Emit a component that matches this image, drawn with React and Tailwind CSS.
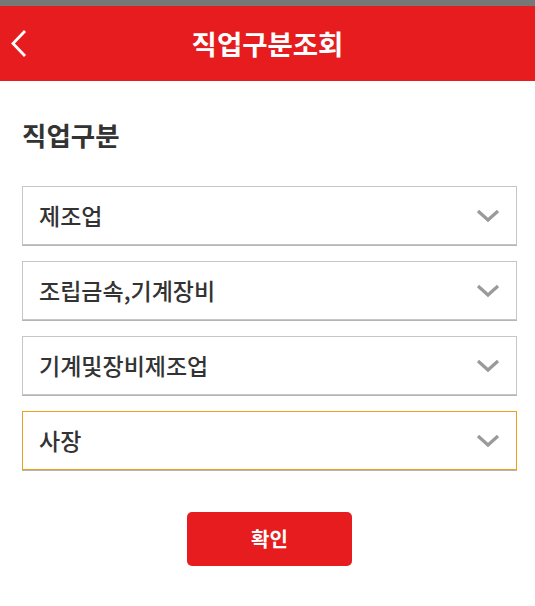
const font = { fontFamily: '"Noto Sans CJK KR", "Noto Sans", sans-serif' };

function Chevron() {
  return (
    <svg width="24" height="14" viewBox="0 0 24 14" className="shrink-0">
      <path d="M2 2 L12 11 L22 2" fill="none" stroke="#9a9a9a" strokeWidth="3.2" />
    </svg>
  );
}

function SelectBox({ label, active }) {
  return (
    <div
      className={`h-[59px] flex items-center justify-between pl-[16px] pr-[16px] bg-white border shadow-[0_1px_0_#b5b5b5] ${
        active ? "border-[#e9a21c]" : "border-[#c6c6c6]"
      }`}
    >
      <span className="text-[23px] font-medium text-[#333] leading-none">{label}</span>
      <Chevron />
    </div>
  );
}

export default function App() {
  const items = ["제조업", "조립금속,기계장비", "기계및장비제조업", "사장"];

  return (
    <div className="w-[535px] h-[606px] bg-white" style={font}>
      <div className="h-[6px] bg-[#777777]" />

      {/* Header */}
      <header className="relative h-[75px] bg-[#e61c1e] flex items-center justify-center">
        <svg
          width="20"
          height="32"
          viewBox="0 0 20 32"
          className="absolute left-[9px] top-[23px]"
        >
          <path d="M16 2 L4 14.5 L16 27" fill="none" stroke="#fff" strokeWidth="2.8" />
        </svg>
        <h1 className="text-[27.5px] font-bold text-white leading-none">
          직업구분조회
        </h1>
      </header>

      {/* Body */}
      <main className="pl-[22px] pr-[18px] pt-[37px]">
        <h2 className="text-[26.5px] font-bold text-[#333] leading-[34px]">직업구분</h2>

        <div className="mt-[34px] flex flex-col gap-[16px]">
          {items.map((it, i) => (
            <SelectBox key={it} label={it} active={i === 3} />
          ))}
        </div>

        <div className="mt-[42px] flex justify-center">
          <button className="w-[165px] h-[54px] rounded-[5px] bg-[#e61c1e] text-white text-[20px] font-bold">
            확인
          </button>
        </div>
      </main>
    </div>
  );
}
